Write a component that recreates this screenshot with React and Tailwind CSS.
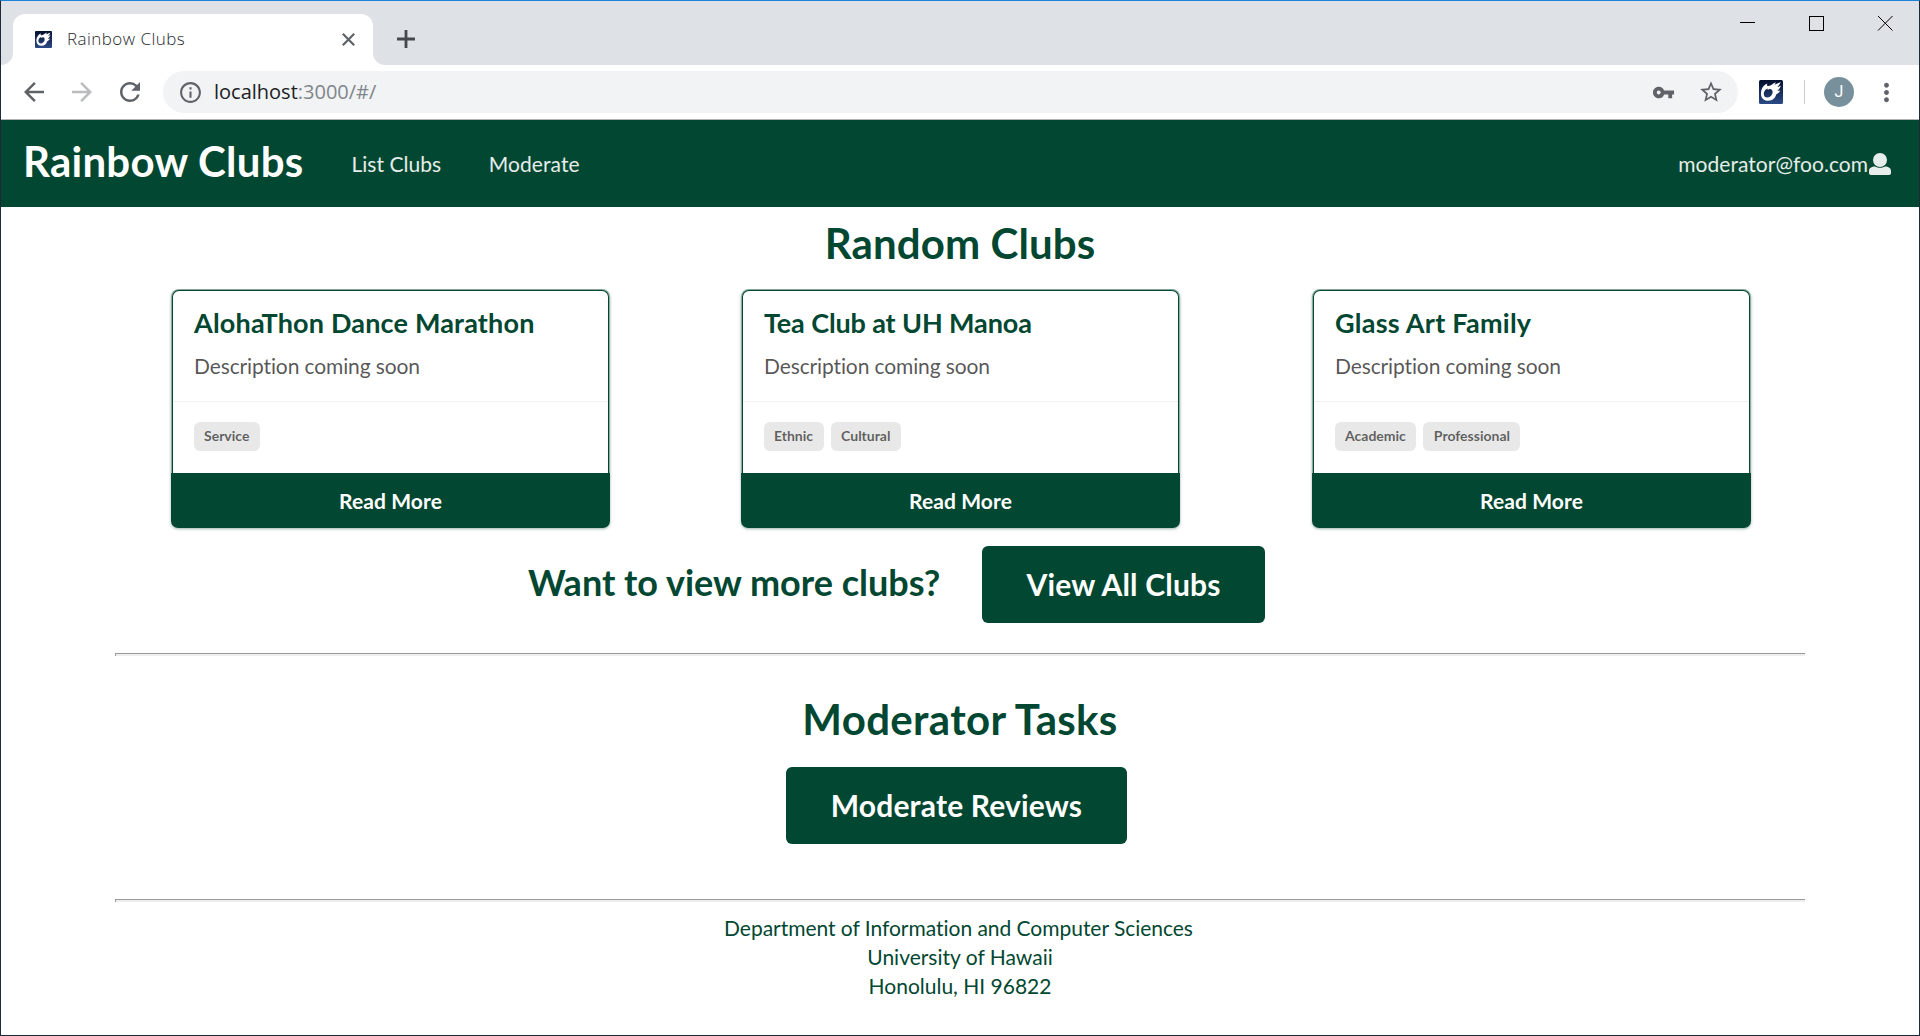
import React from "react";
import { MdArrowBack, MdArrowForward, MdRefresh, MdInfoOutline, MdVpnKey, MdStarBorder, MdMoreVert } from "react-icons/md";

const clubs = [
  { name: "AlohaThon Dance Marathon", tags: ["Service"], tracking: "tracking-[0.18px]" },
  { name: "Tea Club at UH Manoa", tags: ["Ethnic", "Cultural"], tracking: "tracking-[-0.12px]" },
  { name: "Glass Art Family", tags: ["Academic", "Professional"], tracking: "tracking-[0.25px]" },
];

function CometLogo({ className, id }) {
  return (
    <svg viewBox="0 0 24 24" className={className}>
      <defs>
        <linearGradient id={id} x1="0" y1="0" x2="0" y2="1">
          <stop offset="0" stopColor="#04102c" />
          <stop offset="1" stopColor="#2b4a86" />
        </linearGradient>
      </defs>
      <rect width="24" height="24" rx="1.5" fill={`url(#${id})`} />
      <path
        fillRule="evenodd"
        fill="#fff"
        d="M2 14.500C1.900 10 3.500 5.500 8.500 3.600C7.800 4.700 7.800 5.600 8.600 6C11 6.500 13.500 3.500 17 2.200L15.500 4.600C17.800 4.300 19.500 2.900 21.800 2C21 4 19.800 5.500 18.300 6.800C19.800 6.700 20.800 6.200 22 5.800C21 8 19.700 9.600 18.300 10.900C19.300 11 20.300 10.600 21.300 10.500C20.300 12.500 18.900 13.600 17.300 14.300C16.500 18 13.500 20.700 9.200 20.800C5 20.900 2.200 18.200 2 14.500ZM4.800 14.200C5 16.500 6.500 17.700 8.600 17.500C11.500 17.200 13.600 14.700 13.600 12C13.600 9.800 12.300 8.900 10.400 9L8.600 10L8.800 8.400C6.200 9 4.600 11.500 4.800 14.200Z"
      />
    </svg>
  );
}

function BrowserChrome() {
  return (
    <div className="font-['Open_Sans','Noto_Sans',sans-serif]">
      <div className="flex h-16 items-end justify-between bg-[#dee1e6]">
        <div className="flex items-end">
          <div className="h-3 w-3 bg-white">
            <div className="h-3 w-3 rounded-br-xl bg-[#dee1e6]" />
          </div>
          <div className="flex h-[51px] w-[360px] items-center rounded-t-xl bg-white pr-[18px] pl-[22px]">
            <CometLogo id="tabIcon" className="h-[17px] w-[17px]" />
            <span className="-mt-[2px] ml-[15px] flex-1 text-[17px] font-light tracking-[0.45px] text-[#26292d]">Rainbow Clubs</span>
            <svg viewBox="0 0 13 13" className="h-[13px] w-[13px]" stroke="#5f6368" strokeWidth="2.2">
              <path d="M.8 .8L12.200 12.200M12.200 .8L.8 12.200" />
            </svg>
          </div>
          <div className="h-3 w-3 bg-white">
            <div className="h-3 w-3 rounded-bl-xl bg-[#dee1e6]" />
          </div>
          <div className="ml-3 flex h-[51px] w-[26px] items-center">
            <svg viewBox="0 0 18 18" className="-mt-px h-[18px] w-[18px]" stroke="#45484c" strokeWidth="2.8">
              <path d="M9 0V18M0 9H18" />
            </svg>
          </div>
        </div>
        <svg viewBox="0 0 160 44" className="mr-[22px] h-16 w-[160px] pb-5" fill="none" stroke="#000" shapeRendering="crispEdges">
          <path d="M3 21.500H18M72.500 15.500H86.500V29.500H72.500Z" />
          <path d="M141 15L155.500 29.500M155.500 15L141 29.500" shapeRendering="auto" />
        </svg>
      </div>
      <div className="flex h-[54px] items-center bg-white pl-[18px] text-[#5f6368]">
        <MdArrowBack className="h-[30px] w-[30px]" />
        <MdArrowForward className="ml-[18px] h-[30px] w-[30px] text-[#babcbe]" />
        <MdRefresh className="ml-[18px] h-[30px] w-[30px]" />
        <div className="ml-[18px] flex h-[42px] w-[1575px] items-center rounded-full bg-[#f1f3f4] pr-[14px] pl-[15px]">
          <MdInfoOutline className="h-[25px] w-[25px]" />
          <span className="ml-[11px] flex-1 text-[20px] text-[#202124]">
            localhost<span className="text-[#80868b]">:3000/#/</span>
          </span>
          <MdVpnKey className="h-[23px] w-[23px]" />
          <MdStarBorder className="ml-[23px] h-[26px] w-[26px]" />
        </div>
        <CometLogo id="extIcon" className="ml-[21px] h-6 w-6" />
        <div className="ml-[21px] h-6 w-px bg-[#cbcdd1]" />
        <div className="ml-[19px] flex h-[30px] w-[30px] items-center justify-center rounded-full bg-[#78909c] font-[Roboto,sans-serif] text-[16px] text-white">J</div>
        <MdMoreVert className="ml-[18px] h-[29px] w-[29px]" />
      </div>
      <div className="h-px bg-[#b3b5b5]" />
    </div>
  );
}

function NavBar() {
  return (
    <nav className="flex h-[87px] items-center bg-[#024731] pr-[28px] pl-[22px] text-[21px] tracking-[0.03px] text-white/90">
      <h1 className="-mt-[5px] text-[42px] leading-[54px] font-bold tracking-[0.25px] text-white">Rainbow Clubs</h1>
      <span className="ml-12">List Clubs</span>
      <span className="ml-[47.5px] tracking-[0.1px]">Moderate</span>
      <span className="ml-auto">moderator@foo.com</span>
      <svg viewBox="0 0 22 22" className="ml-px h-[22px] w-[22px]" fill="currentColor">
        <circle cx="11" cy="7" r="7" />
        <path d="M0 20V18C0 15 2.500 13.500 6 13.500C9 15.300 13 15.300 16 13.500C19.500 13.500 22 15 22 18V20C22 21.300 21.300 22 20 22H2C.7 22 0 21.300 0 20Z" />
      </svg>
    </nav>
  );
}

function ClubCard({ club }) {
  return (
    <article className="flex h-[238px] w-[439px] flex-col rounded-[7px] shadow-[0_1px_3px_rgba(2,71,49,0.4)]">
      <div className="mx-px flex-1 rounded-t-[7px] border border-b-0 border-[#024731] bg-white shadow-[0_0_0_1px_rgba(2,71,49,0.45)]">
        <div className="h-[110px] px-[21px] pt-[14px]">
          <h2 className={`text-[27px] leading-[35px] font-bold ${club.tracking}`}>{club.name}</h2>
          <p className="mt-[11px] text-[21px] leading-[30px] tracking-[-0.12px] text-black/68">Description coming soon</p>
        </div>
        <div className="flex gap-[7px] border-t border-[#f0f0f0] px-[20.5px] pt-5">
          {club.tags.map((tag) => (
            <span key={tag} className="flex h-[29px] items-center rounded-md bg-[#e8e8e8] px-[10.5px] pb-[2px] text-[14px] font-bold text-black/60">
              {tag}
            </span>
          ))}
        </div>
      </div>
      <button className="relative h-[55px] rounded-b-[7px] bg-[#024731] text-[21px] font-bold tracking-[0.1px] text-white">Read More</button>
    </article>
  );
}

function Divider() {
  return <div className="mx-[114px] h-[3px] border-t border-l border-[#9a9a9a] bg-[#eeeeee]" />;
}

export default function App() {
  return (
    <div className="h-[1036px] w-[1920px] overflow-hidden border border-[#1d2a3a] border-t-[#1883d7] bg-white font-[Lato,sans-serif] text-[#024731] [font-variant-ligatures:none]">
      <BrowserChrome />
      <NavBar />
      <main>
        <h1 className="pt-[9px] text-center text-[42px] leading-[54px] font-bold tracking-[0.1px]">Random Clubs</h1>
        <div className="grid grid-cols-[570px_571px_439px] pt-5 pl-[170px]">
          {clubs.map((club) => (
            <ClubCard key={club.name} club={club} />
          ))}
        </div>
        <div className="mt-[18px] flex h-[77px] items-center pl-[527px]">
          <h2 className="-mt-[5px] w-[454px] text-[36px] leading-[46px] font-bold">Want to view more clubs?</h2>
          <button className="h-[77px] w-[283px] rounded-md bg-[#024731] text-[30px] font-bold tracking-[0.2px] text-white">View All Clubs</button>
        </div>
        <div className="h-[30px]" />
        <Divider />
        <h1 className="mt-9 text-center text-[42px] leading-[54px] font-bold tracking-[0.33px]">Moderator Tasks</h1>
        <button className="mt-[21px] ml-[785px] block h-[77px] w-[341px] rounded-md bg-[#024731] text-[30px] font-bold tracking-[0.16px] text-white">Moderate Reviews</button>
        <div className="h-[55px]" />
        <Divider />
      </main>
      <footer className="pt-[11px] text-center text-[21px] leading-[29px]">
        <p className="pr-[3px] tracking-[-0.03px]">Department of Information and Computer Sciences</p>
        <p>University of Hawaii</p>
        <p>Honolulu, HI 96822</p>
      </footer>
    </div>
  );
}
